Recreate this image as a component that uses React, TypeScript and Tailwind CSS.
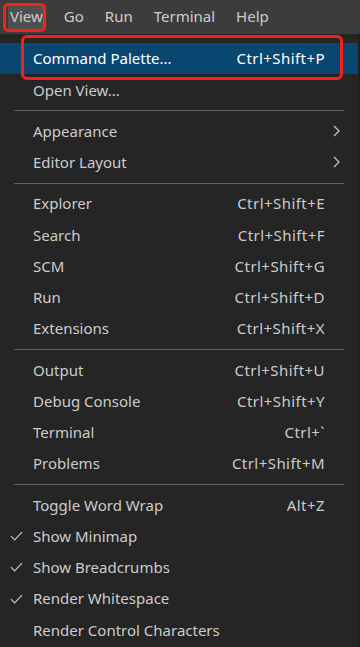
import React from "react";

type Item =
  | { kind: "sep" }
  | { kind: "item"; label: string; keys?: string; sub?: boolean; checked?: boolean; active?: boolean };

const MENU: Item[] = [
  { kind: "item", label: "Command Palette...", keys: "Ctrl+Shift+P", active: true },
  { kind: "item", label: "Open View..." },
  { kind: "sep" },
  { kind: "item", label: "Appearance", sub: true },
  { kind: "item", label: "Editor Layout", sub: true },
  { kind: "sep" },
  { kind: "item", label: "Explorer", keys: "Ctrl+Shift+E" },
  { kind: "item", label: "Search", keys: "Ctrl+Shift+F" },
  { kind: "item", label: "SCM", keys: "Ctrl+Shift+G" },
  { kind: "item", label: "Run", keys: "Ctrl+Shift+D" },
  { kind: "item", label: "Extensions", keys: "Ctrl+Shift+X" },
  { kind: "sep" },
  { kind: "item", label: "Output", keys: "Ctrl+Shift+U" },
  { kind: "item", label: "Debug Console", keys: "Ctrl+Shift+Y" },
  { kind: "item", label: "Terminal", keys: "Ctrl+`" },
  { kind: "item", label: "Problems", keys: "Ctrl+Shift+M" },
  { kind: "sep" },
  { kind: "item", label: "Toggle Word Wrap", keys: "Alt+Z" },
  { kind: "item", label: "Show Minimap", checked: true },
  { kind: "item", label: "Show Breadcrumbs", checked: true },
  { kind: "item", label: "Render Whitespace", checked: true },
  { kind: "item", label: "Render Control Characters" },
];

const TOP = ["View", "Go", "Run", "Terminal", "Help"];

function Check() {
  return (
    <svg width="13" height="10" viewBox="0 0 13 10" fill="none">
      <path d="M1 5.2 L4.6 8.8 L12 1.2" stroke="#c5c5c5" strokeWidth="1.2" />
    </svg>
  );
}

function Chevron() {
  return (
    <svg width="7" height="12" viewBox="0 0 7 12" fill="none">
      <path d="M1 1 L6 6 L1 11" stroke="#c5c5c5" strokeWidth="1.3" />
    </svg>
  );
}

export default function App() {
  return (
    <div
      className="w-[360px] h-[647px] overflow-hidden bg-[#1e1e1e] text-[#cccccc] relative"
      style={{ fontFamily: '"Noto Sans", "Open Sans", sans-serif' }}
    >
      {/* 菜单栏 */}
      <div className="h-[34px] bg-[#3c3c3c] flex items-center pl-[8px] pb-[1px] gap-[17px] text-[15px]">
        {TOP.map((t, i) => (
          <div
            key={t}
            className={`h-[24px] px-[2px] flex items-center rounded-[2px] ${i === 0 ? "bg-[#505050]" : ""}`}
          >
            {t}
          </div>
        ))}
      </div>

      <div className="flex">
        {/* 下拉菜单 */}
        <div className="w-[358px] bg-[#252526] pt-[9px] pb-[10px] text-[15px]">
          {MENU.map((m, i) =>
            m.kind === "sep" ? (
              <div key={i} className="mx-[14px] my-[4.5px] h-px bg-[#606060]" />
            ) : (
              <div
                key={i}
                className={`h-[31.25px] flex items-center pl-[10px] pr-[33px] ${m.active ? "bg-[#094771] text-[#ffffff]" : ""}`}
              >
                <div className="w-[23px] flex items-center">{m.checked && <Check />}</div>
                <span className="flex-1 whitespace-nowrap">{m.label}</span>
                {m.keys && <span className="whitespace-nowrap tracking-[0.45px]">{m.keys}</span>}
                {m.sub && (
                  <span className="-mr-[15px]">
                    <Chevron />
                  </span>
                )}
              </div>
            )
          )}
        </div>
        <div className="flex-1 bg-[#1e1e1e]" />
      </div>

      {/* 标注红框 */}
      <div className="absolute left-[3px] top-[3px] w-[43px] h-[29px] border-[3px] border-[#f5221b] rounded-[5px]" />
      <div className="absolute left-[21px] top-[35px] w-[322px] h-[45px] border-[3px] border-[#f5221b] rounded-[6px]" />
    </div>
  );
}
